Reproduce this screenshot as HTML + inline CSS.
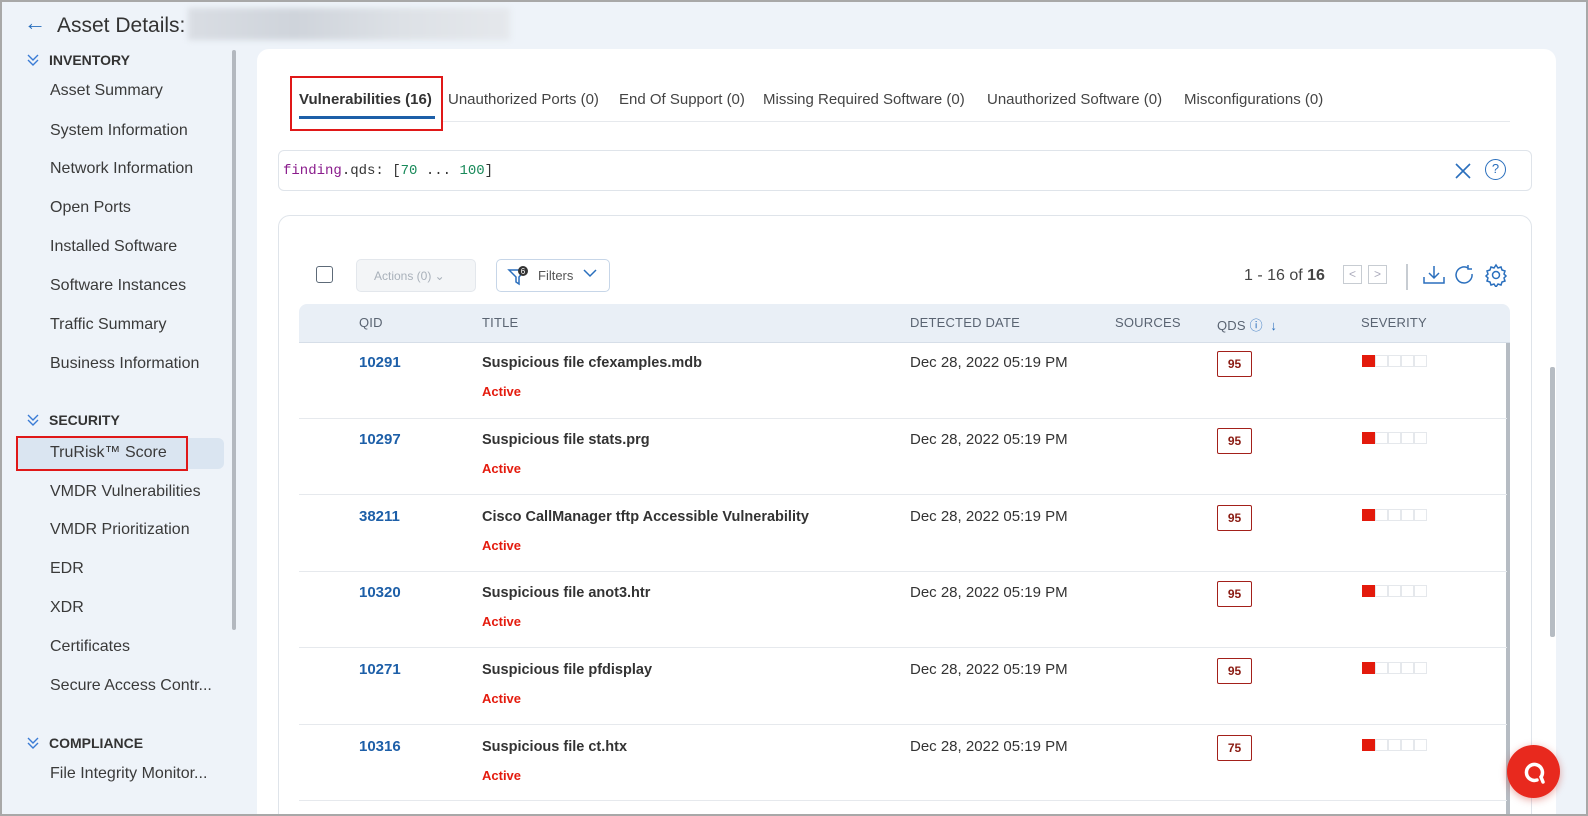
<!DOCTYPE html>
<html><head><meta charset="utf-8"><style>
*{box-sizing:border-box;margin:0;padding:0}
html,body{width:1588px;height:816px;overflow:hidden}
body{background:#eef3f9;font-family:"Liberation Sans",sans-serif;position:relative;color:#333}
#w{position:absolute;left:0;top:0;width:1588px;height:816px;overflow:hidden;border:2px solid #a8a8a8}
.abs{position:absolute}
.nav{position:absolute;left:48px;font-size:16px;color:#3a3a3a}
.sec{position:absolute;left:24px;font-size:14px;font-weight:bold;color:#333;display:flex;align-items:center;gap:9px}
.tab{position:absolute;top:89px;font-size:15px;color:#444}
.th{position:absolute;top:313px;font-size:13px;color:#5a6472;letter-spacing:.2px}
.qid{position:absolute;left:357px;font-size:15px;font-weight:bold;color:#1d5fa8}
.tt{position:absolute;left:480px;font-size:14.5px;font-weight:bold;color:#333}
.act{position:absolute;left:480px;font-size:13px;font-weight:bold;color:#e41b0e}
.dt{position:absolute;left:908px;font-size:15px;color:#333}
.qds{position:absolute;left:1215px;width:35px;height:26px;border:1px solid #a3201a;border-radius:2px;color:#8a1b12;font-size:12px;font-weight:bold;text-align:center;line-height:24px}
.sev{position:absolute;left:1360px;display:flex}
.sev i{width:13px;height:12px;border:1px solid #e5e8ec;display:block}
.sev i:first-child{background:#e31a0c;border-color:#e31a0c}
.rl{position:absolute;left:297px;width:1208px;height:1px;background:#e6e9ed}
</style></head><body><div id="w">
<div class="abs" style="left:22px;top:8px;font-size:22px;color:#2a6fbd">&#8592;</div>
<div class="abs" style="left:55px;top:12px;font-size:21px;color:#333">Asset Details:</div>
<div class="abs" style="left:186px;top:6px;width:322px;height:32px;background:linear-gradient(90deg,#d9dde3,#cfd4db,#dde1e6,#e5e8ec);filter:blur(3px)"></div>

<div class="sec" style="top:50px"><svg width="14" height="14"><path d="M2 2l5 5 5-5M2 7l5 5 5-5" fill="none" stroke="#3a7bd5" stroke-width="1.4"/></svg>INVENTORY</div>
<div class="nav" style="top:80px">Asset Summary</div>
<div class="nav" style="top:120px">System Information</div>
<div class="nav" style="top:158px">Network Information</div>
<div class="nav" style="top:197px">Open Ports</div>
<div class="nav" style="top:236px">Installed Software</div>
<div class="nav" style="top:275px">Software Instances</div>
<div class="nav" style="top:314px">Traffic Summary</div>
<div class="nav" style="top:353px">Business Information</div>
<div class="sec" style="top:410px"><svg width="14" height="14"><path d="M2 2l5 5 5-5M2 7l5 5 5-5" fill="none" stroke="#3a7bd5" stroke-width="1.4"/></svg>SECURITY</div>
<div class="abs" style="left:14px;top:436px;width:208px;height:31px;background:#dae5f1;border-radius:6px"></div>
<div class="abs" style="left:14px;top:434px;width:172px;height:35px;border:2px solid #e01818"></div>
<div class="nav" style="top:442px">TruRisk™ Score</div>
<div class="nav" style="top:481px">VMDR Vulnerabilities</div>
<div class="nav" style="top:519px">VMDR Prioritization</div>
<div class="nav" style="top:558px">EDR</div>
<div class="nav" style="top:597px">XDR</div>
<div class="nav" style="top:636px">Certificates</div>
<div class="nav" style="top:675px">Secure Access Contr...</div>
<div class="sec" style="top:733px"><svg width="14" height="14"><path d="M2 2l5 5 5-5M2 7l5 5 5-5" fill="none" stroke="#3a7bd5" stroke-width="1.4"/></svg>COMPLIANCE</div>
<div class="nav" style="top:763px">File Integrity Monitor...</div>
<div class="abs" style="left:230px;top:48px;width:4px;height:580px;background:#b3b8bf;border-radius:2px"></div>

<div class="abs" style="left:255px;top:47px;width:1299px;height:800px;background:#fff;border-radius:12px"></div>
<div class="abs" style="left:1548px;top:365px;width:5px;height:270px;background:#b6bcc3;border-radius:2px"></div>

<div class="abs" style="left:288px;top:74px;width:153px;height:55px;border:2px solid #e01818"></div>
<div class="tab" style="left:297px;font-weight:bold;color:#333">Vulnerabilities (16)</div>
<div class="abs" style="left:297px;top:114px;width:136px;height:3px;background:#1d5fa8"></div>
<div class="abs" style="left:441px;top:119px;width:1067px;height:1px;background:#e6e9ed"></div>
<div class="tab" style="left:446px">Unauthorized Ports (0)</div>
<div class="tab" style="left:617px">End Of Support (0)</div>
<div class="tab" style="left:761px">Missing Required Software (0)</div>
<div class="tab" style="left:985px">Unauthorized Software (0)</div>
<div class="tab" style="left:1182px">Misconfigurations (0)</div>

<div class="abs" style="left:276px;top:148px;width:1254px;height:41px;border:1px solid #dfe4ea;border-radius:6px"></div>
<div class="abs" style="left:281px;top:161px;font-family:'Liberation Mono',monospace;font-size:14px"><span style="color:#8a1c8c">finding</span>.qds: [<span style="color:#198a5a">70</span> ... <span style="color:#198a5a">100</span>]</div>
<svg class="abs" style="left:1451px;top:159px" width="20" height="20"><path d="M3 3l14 14M17 3L3 17" stroke="#2a6fbd" stroke-width="1.6"/></svg>
<div class="abs" style="left:1483px;top:157px;width:21px;height:21px;border:1.5px solid #2a6fbd;border-radius:50%;color:#2a6fbd;font-size:13px;text-align:center;line-height:18px">?</div>

<div class="abs" style="left:276px;top:213px;width:1254px;height:640px;border:1px solid #dfe4ea;border-radius:12px"></div>
<div class="abs" style="left:314px;top:264px;width:17px;height:17px;border:1.5px solid #5d6a78;border-radius:3px"></div>
<div class="abs" style="left:354px;top:257px;width:120px;height:33px;background:#f3f5f7;border:1px solid #e3e7ec;border-radius:5px;color:#a9b1ba;font-size:12px;padding:9px 0 0 17px">Actions (0) &#8964;</div>
<div class="abs" style="left:494px;top:257px;width:114px;height:33px;border:1px solid #c7d6e8;border-radius:5px"></div>
<svg class="abs" style="left:505px;top:264px" width="22" height="20"><path d="M2 4h16l-6 7v7l-3-2v-5z" fill="none" stroke="#2a6fbd" stroke-width="1.5"/><circle cx="16" cy="5" r="5" fill="#333"/><text x="16" y="8" font-size="8" fill="#fff" text-anchor="middle" font-family="Liberation Sans">6</text></svg>
<div class="abs" style="left:536px;top:266px;font-size:13px;color:#555">Filters</div>
<svg class="abs" style="left:580px;top:266px" width="16" height="10"><path d="M2 2l6 6 6-6" fill="none" stroke="#2a6fbd" stroke-width="1.5"/></svg>

<div class="abs" style="left:1242px;top:265px;font-size:16px;color:#444">1 - 16 of <b>16</b></div>
<div class="abs" style="left:1341px;top:263px;width:19px;height:19px;border:1px solid #c7ccd2;color:#aab;font-size:12px;text-align:center;line-height:17px">&lt;</div>
<div class="abs" style="left:1366px;top:263px;width:19px;height:19px;border:1px solid #c7ccd2;color:#aab;font-size:12px;text-align:center;line-height:17px">&gt;</div>
<div class="abs" style="left:1404px;top:262px;width:2px;height:26px;background:#c7ccd2"></div>
<svg class="abs" style="left:1420px;top:262px" width="24" height="22"><path d="M12 2v12M7 9l5 5 5-5M2 13v6h20v-6" fill="none" stroke="#2a6fbd" stroke-width="1.5"/></svg>
<svg class="abs" style="left:1451px;top:262px" width="22" height="22"><path d="M15 4a8 8 0 1 0 4 6M15 1v4h4" fill="none" stroke="#2a6fbd" stroke-width="1.5"/></svg>
<svg class="abs" style="left:1482px;top:261px" width="24" height="24"><circle cx="12" cy="12" r="3.5" fill="none" stroke="#2a6fbd" stroke-width="1.5"/><path d="M12 2l2 3 3-1 1 3 3 1-1 3 2 2-2 2 1 3-3 1-1 3-3-1-2 3-2-3-3 1-1-3-3-1 1-3-2-2 2-2-1-3 3-1 1-3 3 1z" fill="none" stroke="#2a6fbd" stroke-width="1.5"/></svg>

<div class="abs" style="left:297px;top:302px;width:1211px;height:39px;background:#e9eff6;border-radius:8px 8px 0 0;border-bottom:1px solid #d6dee8"></div>
<div class="th" style="left:357px">QID</div>
<div class="th" style="left:480px">TITLE</div>
<div class="th" style="left:908px">DETECTED DATE</div>
<div class="th" style="left:1113px">SOURCES</div>
<div class="th" style="left:1215px">QDS <span style="color:#2a6fbd">&#9432; &nbsp;&#8595;</span></div>
<div class="th" style="left:1359px">SEVERITY</div>
<div class="abs" style="left:1504px;top:341px;width:4px;height:480px;background:#b6bcc3"></div>

<div class="qid" style="top:352px">10291</div><div class="tt" style="top:353px">Suspicious file cfexamples.mdb</div><div class="act" style="top:382px">Active</div><div class="dt" style="top:352px">Dec 28, 2022 05:19 PM</div><div class="qds" style="top:349px">95</div><div class="sev" style="top:353px"><i></i><i></i><i></i><i></i><i></i></div>
<div class="rl" style="top:416px"></div>
<div class="qid" style="top:429px">10297</div><div class="tt" style="top:430px">Suspicious file stats.prg</div><div class="act" style="top:459px">Active</div><div class="dt" style="top:429px">Dec 28, 2022 05:19 PM</div><div class="qds" style="top:426px">95</div><div class="sev" style="top:430px"><i></i><i></i><i></i><i></i><i></i></div>
<div class="rl" style="top:492px"></div>
<div class="qid" style="top:506px">38211</div><div class="tt" style="top:507px">Cisco CallManager tftp Accessible Vulnerability</div><div class="act" style="top:536px">Active</div><div class="dt" style="top:506px">Dec 28, 2022 05:19 PM</div><div class="qds" style="top:503px">95</div><div class="sev" style="top:507px"><i></i><i></i><i></i><i></i><i></i></div>
<div class="rl" style="top:569px"></div>
<div class="qid" style="top:582px">10320</div><div class="tt" style="top:583px">Suspicious file anot3.htr</div><div class="act" style="top:612px">Active</div><div class="dt" style="top:582px">Dec 28, 2022 05:19 PM</div><div class="qds" style="top:579px">95</div><div class="sev" style="top:583px"><i></i><i></i><i></i><i></i><i></i></div>
<div class="rl" style="top:645px"></div>
<div class="qid" style="top:659px">10271</div><div class="tt" style="top:660px">Suspicious file pfdisplay</div><div class="act" style="top:689px">Active</div><div class="dt" style="top:659px">Dec 28, 2022 05:19 PM</div><div class="qds" style="top:656px">95</div><div class="sev" style="top:660px"><i></i><i></i><i></i><i></i><i></i></div>
<div class="rl" style="top:722px"></div>
<div class="qid" style="top:736px">10316</div><div class="tt" style="top:737px">Suspicious file ct.htx</div><div class="act" style="top:766px">Active</div><div class="dt" style="top:736px">Dec 28, 2022 05:19 PM</div><div class="qds" style="top:733px">75</div><div class="sev" style="top:737px"><i></i><i></i><i></i><i></i><i></i></div>
<div class="rl" style="top:798px"></div>

<div class="abs" style="left:1505px;top:743px;width:53px;height:53px;border-radius:50%;background:#e8291e;box-shadow:0 2px 8px rgba(200,40,30,.4)"></div>
<svg class="abs" style="left:1518px;top:756px" width="28" height="28"><path d="M17 22a8 8 0 1 1 4-3l2 5" fill="none" stroke="#fff" stroke-width="3.5" stroke-linecap="round"/></svg>
</div></body></html>
